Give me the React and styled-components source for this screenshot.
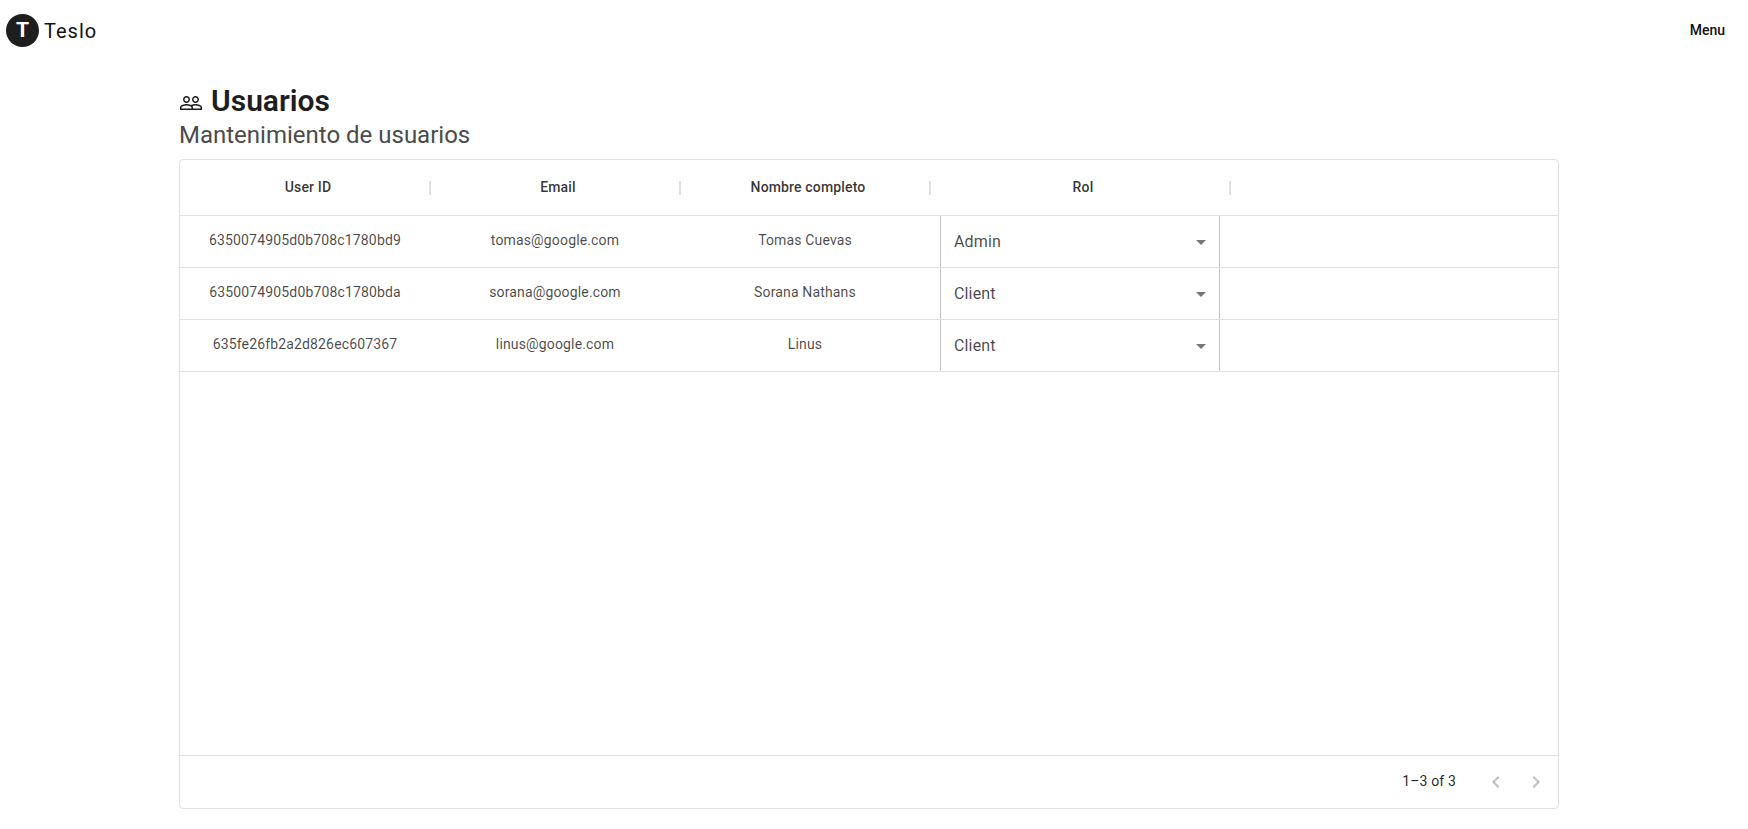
import React from 'react';
import styled, { createGlobalStyle } from 'styled-components';

const Global = createGlobalStyle`
  * { box-sizing: border-box; }
  html, body { margin: 0; padding: 0; background: #fff; }
  body { font-family: Roboto, "Liberation Sans", sans-serif; color: rgba(0,0,0,.87); }
`;

const Page = styled.div`
  display: flex;
  flex-direction: column;
  height: 829px;
  overflow: hidden;
`;

const Nav = styled.header`
  display: flex;
  align-items: center;
  justify-content: space-between;
  height: 60px;
  padding: 0 23px 0 6px;
`;

const Brand = styled.div`
  display: flex;
  align-items: center;
  gap: 5px;
`;

const LogoMark = styled.span`
  display: flex;
  align-items: center;
  justify-content: center;
  width: 33px;
  height: 33px;
  border-radius: 50%;
  background: #1e1e1e;
  color: #fff;
  font-size: 21px;
  font-weight: 700;
`;

const BrandName = styled.span`
  font-size: 20px;
  letter-spacing: 1px;
  color: #111;
  padding-top: 2px;
`;

const MenuButton = styled.button`
  border: 0;
  background: none;
  padding: 0;
  font: 500 14px Roboto, sans-serif;
  color: #111;
`;

const Main = styled.main`
  width: 1380px;
  margin-left: 179px;
  padding-top: 20px;
`;

const Title = styled.h1`
  display: flex;
  align-items: center;
  gap: 8px;
  margin: 0;
  padding-top: 1px;
  font-size: 30px;
  line-height: 40px;
  font-weight: 600;
  color: #1e1e1e;
`;

const Subtitle = styled.h2`
  margin: 0;
  font-size: 24px;
  line-height: 28px;
  font-weight: 400;
  color: #4b4b4b;
`;

const TitleIcon = styled.svg`
  width: 24px;
  height: 24px;
  fill: #1e1e1e;
  margin-top: 3px;
`;

const Grid = styled.section`
  display: flex;
  flex-direction: column;
  height: 650px;
  margin-top: 10px;
  border: 1px solid #e0e0e0;
  border-radius: 4px;
`;

const HeaderRow = styled.div`
  display: flex;
  align-items: center;
  height: 56px;
  flex: none;
  border-bottom: 1px solid #e0e0e0;
`;

const HeaderCell = styled.div`
  display: flex;
  align-items: center;
  width: ${p => p.$w}px;
  font-size: 14px;
  font-weight: 500;
  letter-spacing: .15px;
  color: rgba(0,0,0,.8);
`;

const HeaderLabel = styled.span`
  flex: 1;
  text-align: center;
  padding: 0 0 1px 7px;
`;

const Separator = styled.span`
  width: 2px;
  height: 14px;
  margin-right: -1px;
  background: #e0e0e0;
`;

const Row = styled.div`
  display: flex;
  height: 52px;
  flex: none;
  border-bottom: 1px solid #e0e0e0;
`;

const Cell = styled.div`
  display: flex;
  align-items: center;
  justify-content: center;
  width: ${p => p.$w}px;
  padding: 0 10px 3px;
  font-size: 14px;
  letter-spacing: .15px;
  color: rgba(0,0,0,.72);
`;

const SelectCell = styled.div`
  display: flex;
  width: 300px;
  padding: 0 10px;
`;

const Select = styled.div`
  display: flex;
  flex: 1;
  align-items: center;
  justify-content: space-between;
  padding: 0 6px 0 13px;
  border-left: 1px solid rgba(0,0,0,.23);
  border-right: 1px solid rgba(0,0,0,.23);
  font-size: 16px;
  letter-spacing: .15px;
  color: rgba(0,0,0,.72);
`;

const Caret = styled.svg`
  width: 24px;
  height: 24px;
  fill: rgba(0,0,0,.54);
`;

const Empty = styled.div`
  flex: 1;
`;

const Footer = styled.footer`
  display: flex;
  align-items: center;
  justify-content: flex-end;
  height: 53px;
  flex: none;
  padding-right: 2px;
  border-top: 1px solid #e0e0e0;
`;

const PageCount = styled.span`
  font-size: 14px;
  letter-spacing: .15px;
  color: rgba(0,0,0,.87);
  margin: 0 20px 2px 0;
`;

const PagerButton = styled.span`
  display: flex;
  align-items: center;
  justify-content: center;
  width: 40px;
  height: 40px;
`;

const PagerIcon = styled.svg`
  width: 24px;
  height: 24px;
  fill: rgba(0,0,0,.26);
`;

const users = [
  { id: '6350074905d0b708c1780bd9', email: 'tomas@google.com', name: 'Tomas Cuevas', role: 'Admin' },
  { id: '6350074905d0b708c1780bda', email: 'sorana@google.com', name: 'Sorana Nathans', role: 'Client' },
  { id: '635fe26fb2a2d826ec607367', email: 'linus@google.com', name: 'Linus', role: 'Client' },
];

const columns = [
  { label: 'User ID', w: 250 },
  { label: 'Email', w: 250 },
  { label: 'Nombre completo', w: 250 },
  { label: 'Rol', w: 300 },
];

export default function App() {
  return (
    <Page>
      <Global />
      <Nav>
        <Brand>
          <LogoMark>T</LogoMark>
          <BrandName>Teslo</BrandName>
        </Brand>
        <MenuButton>Menu</MenuButton>
      </Nav>
      <Main>
        <Title>
          <TitleIcon viewBox="0 0 24 24">
            <path d="M16.5 13c-1.2 0-3.07.34-4.5 1-1.43-.67-3.3-1-4.5-1C5.33 13 1 14.08 1 16.25V19h22v-2.75c0-2.17-4.33-3.25-6.5-3.25zm-4 4.5h-10v-1.25c0-.54 2.56-1.75 5-1.75s5 1.21 5 1.75v1.25zm9 0H14v-1.25c0-.46-.2-.86-.52-1.22.88-.3 1.96-.53 3.02-.53 2.44 0 5 1.21 5 1.75v1.25zM7.5 12c1.93 0 3.5-1.57 3.5-3.5S9.43 5 7.5 5 4 6.57 4 8.5 5.57 12 7.5 12zm0-5.5c1.1 0 2 .9 2 2s-.9 2-2 2-2-.9-2-2 .9-2 2-2zm9 5.5c1.93 0 3.5-1.57 3.5-3.5S18.43 5 16.5 5 13 6.57 13 8.5s1.57 3.5 3.5 3.5zm0-5.5c1.1 0 2 .9 2 2s-.9 2-2 2-2-.9-2-2 .9-2 2-2z" />
          </TitleIcon>
          Usuarios
        </Title>
        <Subtitle>Mantenimiento de usuarios</Subtitle>
        <Grid>
          <HeaderRow>
            {columns.map(c => (
              <HeaderCell key={c.label} $w={c.w}>
                <HeaderLabel>{c.label}</HeaderLabel>
                <Separator />
              </HeaderCell>
            ))}
          </HeaderRow>
          {users.map(u => (
            <Row key={u.id}>
              <Cell $w={250}>{u.id}</Cell>
              <Cell $w={250}>{u.email}</Cell>
              <Cell $w={250}>{u.name}</Cell>
              <SelectCell>
                <Select>
                  {u.role}
                  <Caret viewBox="0 0 24 24"><path d="M7 10l5 5 5-5z" /></Caret>
                </Select>
              </SelectCell>
            </Row>
          ))}
          <Empty />
          <Footer>
            <PageCount>1–3 of 3</PageCount>
            <PagerButton>
              <PagerIcon viewBox="0 0 24 24"><path d="M15.41 16.59 10.83 12l4.58-4.59L14 6l-6 6 6 6 1.41-1.41z" /></PagerIcon>
            </PagerButton>
            <PagerButton>
              <PagerIcon viewBox="0 0 24 24"><path d="M8.59 16.59 13.17 12 8.59 7.41 10 6l6 6-6 6-1.41-1.41z" /></PagerIcon>
            </PagerButton>
          </Footer>
        </Grid>
      </Main>
    </Page>
  );
}
